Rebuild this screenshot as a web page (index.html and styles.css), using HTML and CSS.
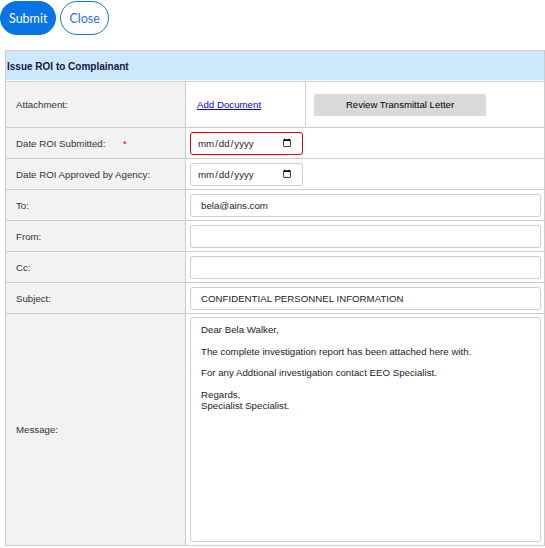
FILE: index.html
```html
<!DOCTYPE html>
<html lang="en">
<head>
    <meta charset="UTF-8">
    <title>Issue ROI to Complainant</title>
    <link rel="stylesheet" href="styles.css">
</head>
<body>
    <!-- Action buttons -->
    <div class="toolbar">
        <button class="btn btn-primary">Submit</button>
        <button class="btn btn-outline">Close</button>
    </div>

    <!-- ROI form -->
    <table class="form-table">
        <colgroup>
            <col class="col-label">
            <col class="col-mid">
            <col>
        </colgroup>
        <tr>
            <th colspan="3" class="section-title">Issue ROI to Complainant</th>
        </tr>
        <tr class="row-tall">
            <td class="label">Attachment:</td>
            <td class="link-cell"><a href="#">Add Document</a></td>
            <td class="button-cell"><button class="btn-grey">Review Transmittal Letter</button></td>
        </tr>
        <tr>
            <td class="label">Date ROI Submitted: <span class="required">*</span></td>
            <td colspan="2" class="field"><input type="date" class="date-input is-invalid"></td>
        </tr>
        <tr>
            <td class="label">Date ROI Approved by Agency:</td>
            <td colspan="2" class="field"><input type="date" class="date-input"></td>
        </tr>
        <tr>
            <td class="label">To:</td>
            <td colspan="2" class="field"><input type="text" class="text-input" value="bela@ains.com"></td>
        </tr>
        <tr>
            <td class="label">From:</td>
            <td colspan="2" class="field"><input type="text" class="text-input"></td>
        </tr>
        <tr>
            <td class="label">Cc:</td>
            <td colspan="2" class="field"><input type="text" class="text-input"></td>
        </tr>
        <tr>
            <td class="label">Subject:</td>
            <td colspan="2" class="field"><input type="text" class="text-input" value="CONFIDENTIAL PERSONNEL INFORMATION"></td>
        </tr>
        <tr class="row-message">
            <td class="label">Message:</td>
            <td colspan="2" class="field"><textarea class="message">Dear Bela Walker,

The complete investigation report has been attached here with.

For any Addtional investigation contact EEO Specialist.

Regards,
Specialist Specialist.</textarea></td>
        </tr>
    </table>
</body>
</html>
```

FILE: styles.css
```css
/* Page */
body {
    margin: 0;
    font-family: "Liberation Sans", Arial, sans-serif;
    background-color: #fff;
}

/* Top buttons */
.toolbar {
    display: flex;
    gap: 4px;
    padding-top: 1px;
    margin-bottom: 15px;
}

.btn {
    font-family: Lato, "Open Sans", sans-serif;
    font-size: 12.5px;
    height: 34px;
    padding: 0 8px;
    border-radius: 17px;
    cursor: pointer;
}

.btn-primary {
    background-color: #0a74e4;
    border: 1px solid #0a74e4;
    color: #fff;
}

.btn-outline {
    background-color: #fff;
    border: 1px solid #1a73e8;
    color: #2d6fdc;
}

/* Form table */
.form-table {
    border-collapse: collapse;
    table-layout: fixed;
    width: 540px;
    margin-left: 5px;
    font-size: 9.7px;
    color: #333;
}

.col-label {
    width: 180px;
}

.col-mid {
    width: 120px;
}

.form-table th,
.form-table td {
    border: 1px solid #ccc;
    padding: 0;
    height: 30px;
}

.section-title {
    background-color: #cce9fc;
    box-shadow: inset 0 -1px #fff;
    text-align: left;
    padding-left: 1px !important;
    font-size: 10px;
    font-weight: bold;
    color: #141448;
}

.form-table .label {
    background-color: #f2f2f2;
    padding-left: 10px;
}

.required {
    color: #e00000;
    margin-left: 15px;
}

.row-tall td {
    height: 45px;
}

.link-cell {
    padding-left: 11px !important;
}

.link-cell a {
    color: #0000ee;
}

.button-cell {
    padding-left: 8px !important;
}

.btn-grey {
    width: 172px;
    height: 22px;
    background-color: #d9d9d9;
    border: none;
    border-radius: 2px;
    font-family: "Liberation Sans", Arial, sans-serif;
    font-size: 9.6px;
    color: #000;
}

.field {
    padding: 0 3px 0 4px !important;
}

/* Inputs */
.text-input,
.date-input {
    box-sizing: border-box;
    height: 23px;
    border: 1px solid #ccc;
    border-radius: 3px;
    font-family: "Liberation Sans", Arial, sans-serif;
    font-size: 9.7px;
    color: #222;
    display: block;
}

.text-input {
    width: 100%;
    padding: 0 10px;
}

.date-input {
    width: 113px;
    padding: 0 8px 0 6px;
}

.date-input.is-invalid {
    border-color: #e00000;
}

.row-message td {
    height: 231px;
}

.message {
    display: block;
    box-sizing: border-box;
    width: 100%;
    height: 225px;
    padding: 7px 10px;
    border: 1px solid #ccc;
    border-radius: 3px;
    resize: none;
    font-family: "Liberation Sans", Arial, sans-serif;
    font-size: 9.7px;
    line-height: 10.8px;
    color: #222;
}
```
